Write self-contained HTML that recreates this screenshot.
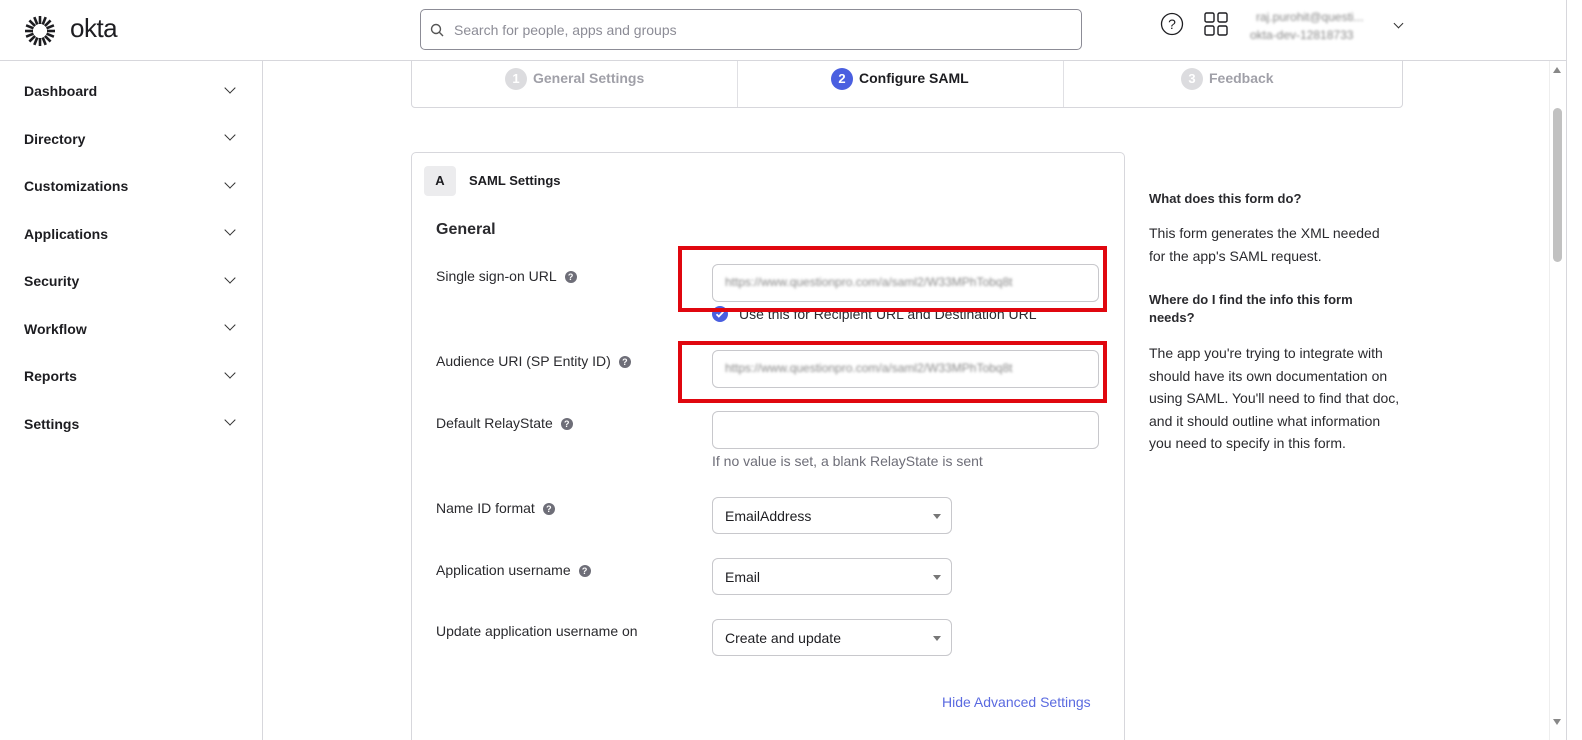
<!DOCTYPE html>
<html style="width:1582px;height:740px;overflow:hidden"><head><style>
*{box-sizing:border-box;margin:0;padding:0}
body{width:1582px;height:740px;overflow:hidden;background:#fff;font-family:"Liberation Sans",sans-serif;color:#1d1d21;position:relative}
.a{position:absolute}
.nav{left:24px;font-size:14px;font-weight:bold;color:#1d1d21}
.chev{left:226px;width:8px;height:8px;border-right:1.5px solid #333;border-bottom:1.5px solid #333;transform:rotate(45deg)}
.lbl{left:436px;font-size:14px;color:#2a2a2e}
.q{display:inline-block;width:12px;height:12px;border-radius:50%;background:#6e6e78;color:#fff;font-size:9px;text-align:center;line-height:12px;font-weight:bold;margin-left:8px;vertical-align:1px}
.inp{left:712px;width:387px;height:38px;border:1px solid #c8c8cc;border-radius:6px;font-size:12px;color:#bbb;padding:10px 12px}
.blur{filter:blur(1.3px);color:#888}
.sel{left:712px;width:240px;height:37px;border:1px solid #c8c8cc;border-radius:6px;font-size:14px;padding:10px 12px;color:#1d1d21}
.sel:after{content:"";position:absolute;right:10px;top:16px;border:4px solid transparent;border-top:5px solid #777}
.red{border:4px solid #e0070f;left:678px;width:429px}
.rp{left:1149px;width:238px;font-size:14px;line-height:22.5px;color:#2a2a2e}
.step{font-size:14px;font-weight:bold;top:68px}
.num{display:inline-block;width:22px;height:22px;border-radius:50%;text-align:center;line-height:22px;color:#fff;font-size:13px;margin-right:6px}
</style></head><body>
<svg class="a" style="left:23px;top:14px" width="34" height="34" viewBox="-17 -17 34 34">
<g stroke="#1d1d21" stroke-width="2.6" stroke-linecap="butt">
<line x1="0" y1="-7" x2="0" y2="-15"/><line x1="0" y1="7" x2="0" y2="15"/><line x1="-7" y1="0" x2="-15" y2="0"/><line x1="7" y1="0" x2="15" y2="0"/>
<line x1="4.9" y1="-4.9" x2="10.6" y2="-10.6"/><line x1="-4.9" y1="4.9" x2="-10.6" y2="10.6"/><line x1="-4.9" y1="-4.9" x2="-10.6" y2="-10.6"/><line x1="4.9" y1="4.9" x2="10.6" y2="10.6"/>
<line x1="2.7" y1="-6.5" x2="5.7" y2="-13.9"/><line x1="-2.7" y1="6.5" x2="-5.7" y2="13.9"/><line x1="-2.7" y1="-6.5" x2="-5.7" y2="-13.9"/><line x1="2.7" y1="6.5" x2="5.7" y2="13.9"/>
<line x1="6.5" y1="-2.7" x2="13.9" y2="-5.7"/><line x1="-6.5" y1="2.7" x2="-13.9" y2="5.7"/><line x1="-6.5" y1="-2.7" x2="-13.9" y2="-5.7"/><line x1="6.5" y1="2.7" x2="13.9" y2="5.7"/>
</g></svg>
<div class="a" style="left:70px;top:13px;font-size:26px;color:#1d1d21;letter-spacing:-0.5px">okta</div>
<div class="a" style="left:420px;top:9px;width:662px;height:41px;border:1px solid #8c8c96;border-radius:5px"></div>
<svg class="a" style="left:430px;top:23px" width="14" height="14" viewBox="0 0 14 14"><circle cx="6" cy="6" r="4.5" fill="none" stroke="#555" stroke-width="1.4"/><line x1="9.3" y1="9.3" x2="13" y2="13" stroke="#555" stroke-width="1.4"/></svg>
<div class="a" style="left:454px;top:22px;font-size:14px;color:#8c8c96">Search for people, apps and groups</div>
<svg class="a" style="left:1160px;top:12px" width="24" height="24" viewBox="0 0 24 24"><circle cx="12" cy="12" r="10.5" fill="none" stroke="#1d1d21" stroke-width="1.3"/><text x="12" y="17" text-anchor="middle" font-size="14" font-family="Liberation Sans" fill="#1d1d21">?</text></svg>
<svg class="a" style="left:1204px;top:12px" width="26" height="24" viewBox="0 0 26 24"><g fill="none" stroke="#1d1d21" stroke-width="1.4"><rect x="1" y="1" width="9" height="9" rx="1.5"/><rect x="14" y="1" width="9" height="9" rx="1.5"/><rect x="1" y="14" width="9" height="9" rx="1.5"/><rect x="14" y="14" width="9" height="9" rx="1.5"/></g></svg>
<div class="a blur" style="left:1256px;top:10px;font-size:12px;color:#888">raj.purohit@questi...</div>
<div class="a blur" style="left:1250px;top:28px;font-size:12px;color:#888">okta-dev-12818733</div>
<div class="a chev" style="left:1395px;top:20px;width:7px;height:7px"></div>
<div class="a" style="left:262px;top:60px;width:1px;height:680px;background:#d7d7dc"></div>
<div class="a nav" style="top:83px">Dashboard</div><div class="a chev" style="top:84px"></div>
<div class="a nav" style="top:131px">Directory</div><div class="a chev" style="top:131px"></div>
<div class="a nav" style="top:178px">Customizations</div><div class="a chev" style="top:179px"></div>
<div class="a nav" style="top:226px">Applications</div><div class="a chev" style="top:226px"></div>
<div class="a nav" style="top:273px">Security</div><div class="a chev" style="top:274px"></div>
<div class="a nav" style="top:321px">Workflow</div><div class="a chev" style="top:321px"></div>
<div class="a nav" style="top:368px">Reports</div><div class="a chev" style="top:369px"></div>
<div class="a nav" style="top:416px">Settings</div><div class="a chev" style="top:416px"></div>
<div class="a" style="left:411px;top:50px;width:992px;height:58px;border:1px solid #d7d7dc;border-radius:4px"></div>
<div class="a" style="left:737px;top:61px;width:1px;height:46px;background:#e0e0e4"></div>
<div class="a" style="left:1063px;top:61px;width:1px;height:46px;background:#e0e0e4"></div>
<div class="a" style="left:0;top:50px;width:1566px;height:10px;background:#fff"></div>
<div class="a" style="left:0;top:60px;width:1566px;height:1px;background:#d7d7dc"></div>
<div class="a step" style="left:505px;color:#a0a0a8"><span class="num" style="background:#dcdcdf">1</span>General Settings</div>
<div class="a step" style="left:831px;color:#1d1d21"><span class="num" style="background:#4a5fe0">2</span>Configure SAML</div>
<div class="a step" style="left:1181px;color:#a0a0a8"><span class="num" style="background:#dcdcdf">3</span>Feedback</div>
<div class="a" style="left:411px;top:152px;width:714px;height:588px;border:1px solid #d7d7dc;border-bottom:none;border-radius:5px 5px 0 0"></div>
<div class="a" style="left:424px;top:166px;width:32px;height:30px;background:#ececee;border-radius:4px;font-size:13px;font-weight:bold;text-align:center;line-height:30px">A</div>
<div class="a" style="left:469px;top:173px;font-size:13px;font-weight:bold">SAML Settings</div>
<div class="a" style="left:436px;top:221px;font-size:16px;font-weight:bold;color:#2a2a2e">General</div>
<div class="a lbl" style="top:268px">Single sign-on URL<span class="q">?</span></div>
<div class="a inp" style="top:264px"><span class="blur">https://www.questionpro.com/a/saml2/W33MPhTobq8t</span></div>
<svg class="a" style="left:712px;top:306px" width="16" height="16" viewBox="0 0 16 16"><circle cx="8" cy="8" r="8" fill="#4a5fe0"/><path d="M4.5 8.2l2.3 2.3 4.5-4.7" fill="none" stroke="#fff" stroke-width="1.8"/></svg>
<div class="a" style="left:739px;top:306px;font-size:14px;color:#2a2a2e">Use this for Recipient URL and Destination URL</div>
<div class="a lbl" style="top:353px">Audience URI (SP Entity ID)<span class="q">?</span></div>
<div class="a inp" style="top:350px"><span class="blur">https://www.questionpro.com/a/saml2/W33MPhTobq8t</span></div>
<div class="a red" style="top:246px;height:66px"></div>
<div class="a red" style="top:341px;height:62px"></div>
<div class="a lbl" style="top:415px">Default RelayState<span class="q">?</span></div>
<div class="a inp" style="top:411px"></div>
<div class="a" style="left:712px;top:453px;font-size:14px;color:#6e6e78">If no value is set, a blank RelayState is sent</div>
<div class="a lbl" style="top:500px">Name ID format<span class="q">?</span></div>
<div class="a sel" style="top:497px">EmailAddress</div>
<div class="a lbl" style="top:562px">Application username<span class="q">?</span></div>
<div class="a sel" style="top:558px">Email</div>
<div class="a lbl" style="top:623px">Update application username on</div>
<div class="a sel" style="top:619px">Create and update</div>
<div class="a" style="left:942px;top:694px;font-size:14px;color:#5a6ae0">Hide Advanced Settings</div>
<div class="a rp" style="top:188px;font-size:13px;font-weight:bold">What does this form do?</div>
<div class="a rp" style="top:222px">This form generates the XML needed for the app's SAML request.</div>
<div class="a rp" style="top:291px;font-size:13px;font-weight:bold;line-height:18px;width:225px">Where do I find the info this form needs?</div>
<div class="a rp" style="top:342px;width:255px">The app you're trying to integrate with should have its own documentation on using SAML. You'll need to find that doc, and it should outline what information you need to specify in this form.</div>
<div class="a" style="left:1549px;top:61px;width:17px;height:679px;background:#fff;border-left:1px solid #eee"></div>
<div class="a" style="left:1553px;top:67px;border:4px solid transparent;border-bottom:6px solid #888;border-top:0;width:0"></div>
<div class="a" style="left:1553px;top:108px;width:9px;height:154px;background:#c1c1c1;border-radius:5px"></div>
<div class="a" style="left:1553px;top:719px;border:4px solid transparent;border-top:6px solid #888;border-bottom:0;width:0"></div>
<div class="a" style="left:1566px;top:0;width:1px;height:740px;background:#d7d7dc"></div>
</body></html>
